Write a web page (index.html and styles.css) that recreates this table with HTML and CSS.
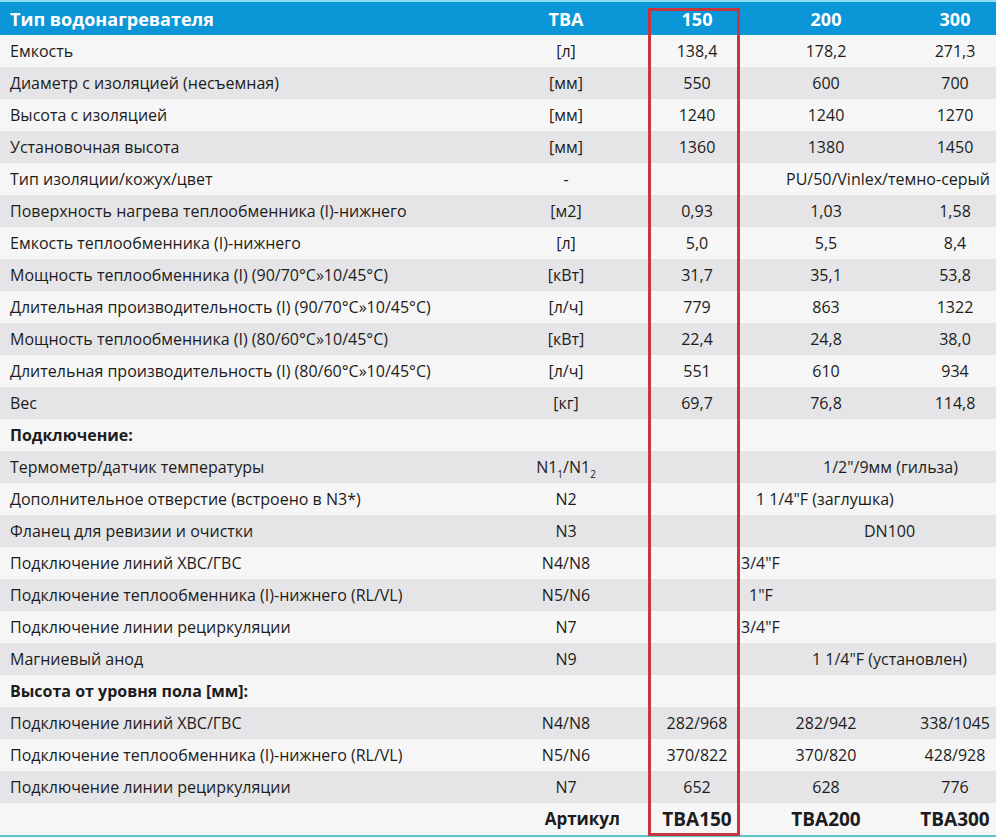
FILE: index.html
```html
<!DOCTYPE html>
<html lang="ru">
<head>
<meta charset="utf-8">
<title>Тип водонагревателя</title>
<link rel="stylesheet" href="styles.css">
</head>
<body>
<div class="sheet">
  <table class="spec">
    <colgroup>
      <col class="c-label"><col class="c-unit"><col class="c-150"><col class="c-200"><col class="c-300">
    </colgroup>
    <thead>
      <tr class="head">
        <th class="label">Тип водонагревателя</th>
        <th>ТВА</th>
        <th class="v150">150</th>
        <th>200</th>
        <th>300</th>
      </tr>
    </thead>
    <tbody>
      <tr><td class="label">Емкость</td><td>[л]</td><td class="v150">138,4</td><td>178,2</td><td>271,3</td></tr>
      <tr><td class="label">Диаметр с изоляцией (несъемная)</td><td>[мм]</td><td class="v150">550</td><td>600</td><td>700</td></tr>
      <tr><td class="label">Высота с изоляцией</td><td>[мм]</td><td class="v150">1240</td><td>1240</td><td>1270</td></tr>
      <tr><td class="label">Установочная высота</td><td>[мм]</td><td class="v150">1360</td><td>1380</td><td>1450</td></tr>
      <tr><td class="label">Тип изоляции/кожух/цвет</td><td>-</td><td colspan="3" class="span s-pu">PU/50/Vinlex/темно-серый</td></tr>
      <tr><td class="label">Поверхность нагрева теплообменника (I)-нижнего</td><td>[м2]</td><td class="v150">0,93</td><td>1,03</td><td>1,58</td></tr>
      <tr><td class="label">Емкость теплообменника (I)-нижнего</td><td>[л]</td><td class="v150">5,0</td><td>5,5</td><td>8,4</td></tr>
      <tr><td class="label">Мощность теплообменника (I) (90/70°C»10/45°C)</td><td>[кВт]</td><td class="v150">31,7</td><td>35,1</td><td>53,8</td></tr>
      <tr><td class="label">Длительная производительность (I) (90/70°C»10/45°C)</td><td>[л/ч]</td><td class="v150">779</td><td>863</td><td>1322</td></tr>
      <tr><td class="label">Мощность теплообменника (I) (80/60°C»10/45°C)</td><td>[кВт]</td><td class="v150">22,4</td><td>24,8</td><td>38,0</td></tr>
      <tr><td class="label">Длительная производительность (I) (80/60°C»10/45°C)</td><td>[л/ч]</td><td class="v150">551</td><td>610</td><td>934</td></tr>
      <tr><td class="label">Вес</td><td>[кг]</td><td class="v150">69,7</td><td>76,8</td><td>114,8</td></tr>
      <tr class="section"><td class="label">Подключение:</td><td></td><td></td><td></td><td></td></tr>
      <tr><td class="label">Термометр/датчик температуры</td><td>N1<sub>1</sub>/N1<sub>2</sub></td><td colspan="3" class="span s-therm">1/2"/9мм (гильза)</td></tr>
      <tr><td class="label">Дополнительное отверстие (встроено в N3*)</td><td>N2</td><td colspan="3" class="span s-plug">1 1/4"F (заглушка)</td></tr>
      <tr><td class="label">Фланец для ревизии и очистки</td><td>N3</td><td colspan="3" class="span s-dn">DN100</td></tr>
      <tr><td class="label">Подключение линий ХВС/ГВС</td><td>N4/N8</td><td colspan="3" class="span s-34">3/4"F</td></tr>
      <tr><td class="label">Подключение теплообменника (I)-нижнего (RL/VL)</td><td>N5/N6</td><td colspan="3" class="span s-1">1"F</td></tr>
      <tr><td class="label">Подключение линии рециркуляции</td><td>N7</td><td colspan="3" class="span s-34">3/4"F</td></tr>
      <tr><td class="label">Магниевый анод</td><td>N9</td><td colspan="3" class="span s-anode">1 1/4"F (установлен)</td></tr>
      <tr class="section"><td class="label">Высота от уровня пола [мм]:</td><td></td><td></td><td></td><td></td></tr>
      <tr><td class="label">Подключение линий ХВС/ГВС</td><td>N4/N8</td><td class="v150">282/968</td><td>282/942</td><td>338/1045</td></tr>
      <tr><td class="label">Подключение теплообменника (I)-нижнего (RL/VL)</td><td>N5/N6</td><td class="v150">370/822</td><td>370/820</td><td>428/928</td></tr>
      <tr><td class="label">Подключение линии рециркуляции</td><td>N7</td><td class="v150">652</td><td>628</td><td>776</td></tr>
      <tr class="article"><td class="label"></td><td class="art">Артикул</td><td class="v150">TBA150</td><td>TBA200</td><td>TBA300</td></tr>
    </tbody>
  </table>
  <div class="highlight" aria-hidden="true"></div>
</div>
</body>
</html>
```

FILE: styles.css
```css
html, body {
  margin: 0;
  padding: 0;
  background: #f6f6f6;
  overflow: hidden;
}

.sheet {
  position: relative;
  width: 996px;
  height: 838px;
  overflow: hidden;
  font-family: "Open Sans", "Noto Sans", sans-serif;
  color: #1c1c1c;
}

.spec {
  width: 1022px;
  table-layout: fixed;
  border-collapse: collapse;
  border-spacing: 0;
  font-size: 16px;
}

.c-label { width: 502px; }
.c-unit  { width: 128px; }
.c-150   { width: 134px; }
.c-200   { width: 124px; }
.c-300   { width: 134px; }

.spec th,
.spec td {
  padding: 0;
  text-align: center;
  white-space: nowrap;
  line-height: 20px;
}

.spec .label {
  text-align: left;
  padding-left: 10px;
}

.head {
  background: #0a96d7;
  border-top: 2px solid #8ed9f3;
  height: 33px;
}

.head th {
  color: #ffffff;
  font-weight: 700;
  font-size: 18px;
  height: 33px;
}

.spec tbody tr {
  height: 32px;
}

.spec tbody td {
  height: 32px;
}

.spec tbody tr:nth-child(odd) { background: #f6f6f6; }
.spec tbody tr:nth-child(even) { background: #e5e5e7; }

.section .label {
  font-weight: 700;
}

.article td {
  font-weight: 700;
  font-size: 19px;
  border-bottom: 2px solid #5ec6c9;
}

.article .art {
  font-size: 17px;
  text-align: right;
  padding-right: 10px;
}

.spec sub {
  font-size: 10px;
  line-height: 0;
  vertical-align: -5px;
}

.span { text-align: left; }
.spec td.s-pu    { text-align: left; padding-left: 156px; }
.spec td.s-therm { text-align: left; padding-left: 193px; }
.spec td.s-plug  { text-align: left; padding-left: 126px; }
.spec td.s-dn    { text-align: left; padding-left: 234px; }
.spec td.s-34    { text-align: left; padding-left: 111px; }
.spec td.s-1     { text-align: left; padding-left: 119px; }
.spec td.s-anode { text-align: left; padding-left: 182px; }

.highlight {
  position: absolute;
  left: 648px;
  top: 8px;
  width: 86px;
  height: 822px;
  border: 3px solid #c8363d;
}
```
